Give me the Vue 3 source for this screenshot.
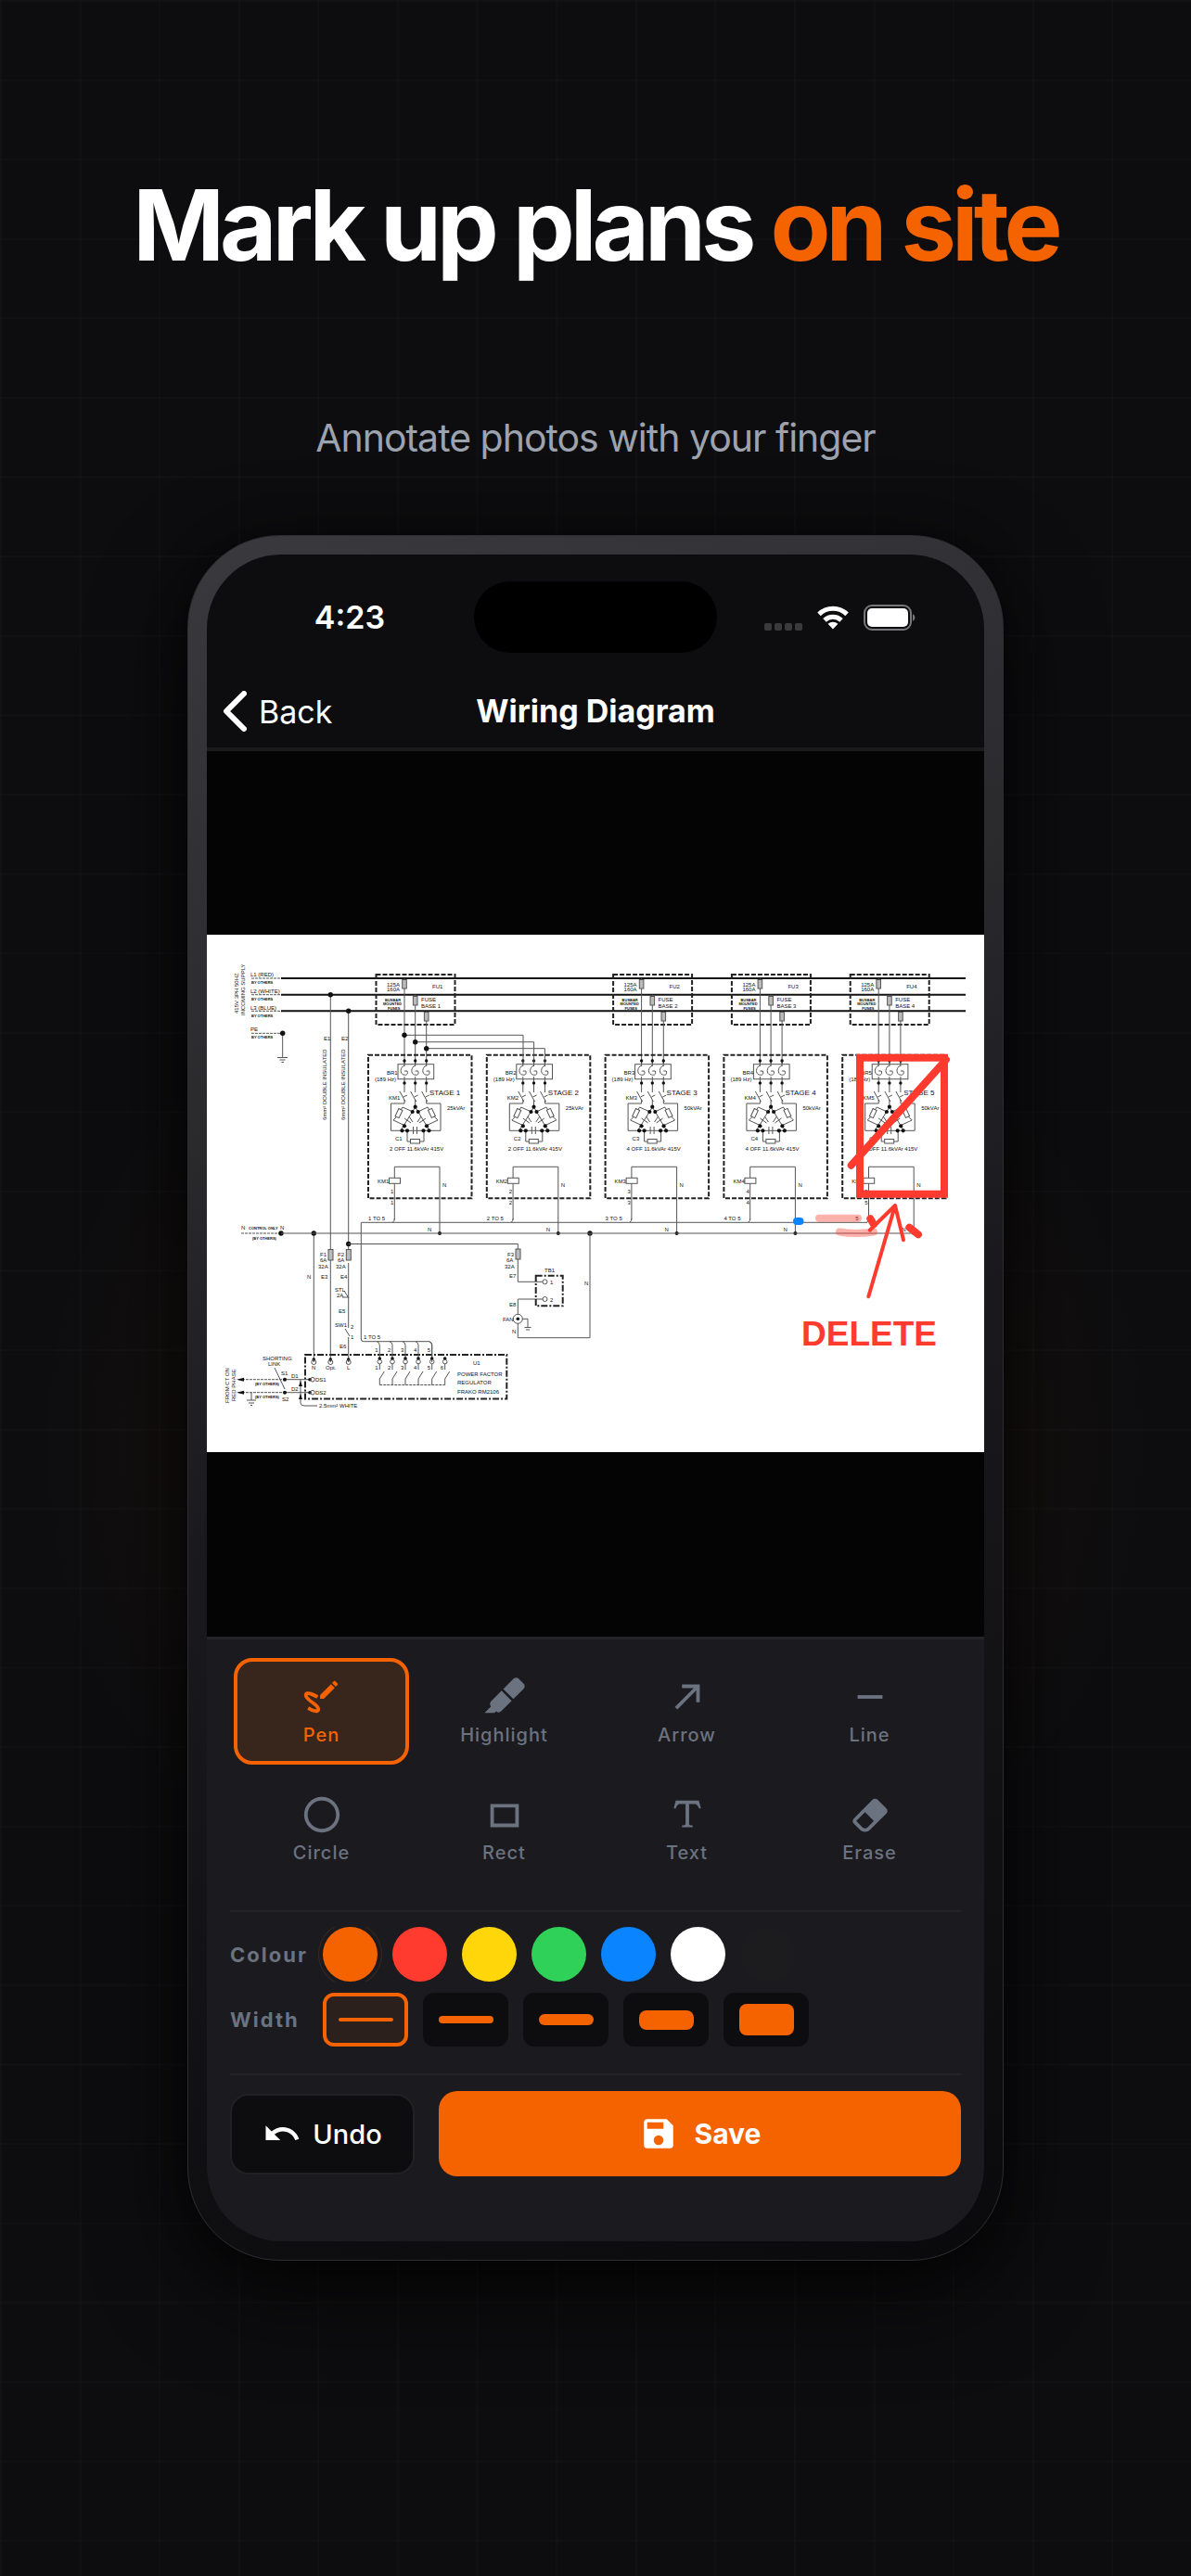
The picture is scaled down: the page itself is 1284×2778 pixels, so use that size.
<template>
  <main class="promo">
    <h1 class="headline">Mark up plans <span class="accent">on site</span></h1>
    <p class="subtitle">Annotate photos with your finger</p>

    <div class="phone">
      <div class="screen">
        <div class="status-bar">
          <span class="time">4:23</span>
          <div class="island"></div>
          <div class="status-icons">
            <div class="signal"><i v-for="n in 4" :key="n"></i></div>
            <svg class="wifi" viewBox="0 0 34 26">
              <path fill="#fff" d="M17 25.5 11.6 19.8a8 8 0 0 1 10.8 0z" />
              <path fill="none" stroke="#fff" stroke-width="5" d="M8 15.9a12.8 12.8 0 0 1 18 0M2 9.4a21.5 21.5 0 0 1 30 0" />
            </svg>
            <svg class="battery" viewBox="0 0 56 28">
              <rect x="1" y="1" width="50" height="26" rx="8" fill="none" stroke="#77777a" stroke-width="2" />
              <rect x="4" y="4" width="44" height="20" rx="5" fill="#fff" />
              <path d="M53 10a4.5 4.5 0 0 1 0 8z" fill="#77777a" />
            </svg>
          </div>
        </div>

        <header class="nav">
          <a href="#" class="back">
            <svg viewBox="0 0 26 44"><path d="M23 3 4 22l19 19" /></svg>
            Back
          </a>
          <h2 class="nav-title">Wiring Diagram</h2>
        </header>

        <div class="canvas">
          <svg class="plan" viewBox="0 0 838 558">
            <rect width="838" height="558" fill="#fff" />

            <!-- supply rails -->
            <path class="rail" d="M80 47H818M80 64.7H818M80 82.3H818" />
            <path class="wire dash" d="M48 47h32M48 64.7h32M48 82.3h32M48 106.3h32M37 322h42" />
            <g v-for="s in supplies" :key="s.label">
              <text x="47" :y="s.y">{{ s.label }}</text>
              <text class="bold" x="48" :y="s.y + 8">BY OTHERS</text>
            </g>
            <text transform="translate(34 85) rotate(-90)">415V 3PH 50HZ</text>
            <text transform="translate(41 87) rotate(-90)">INCOMING SUPPLY</text>
            <path class="wire" d="M81.7 106V132M76 132.5h11M78.5 135h6M80.5 137.5h2.5" />

            <!-- control feeds -->
            <path class="wire" d="M133.3 64.7V461M152.7 82.3V341M152.7 354V424M152.7 434V461M115.3 322V461" />
            <text x="126" y="114">E1</text>
            <text x="145" y="114">E2</text>
            <text transform="translate(129 200) rotate(-90)">6mm² DOUBLE INSULATED</text>
            <text transform="translate(149 200) rotate(-90)">6mm² DOUBLE INSULATED</text>

            <!-- stages -->
            <g v-for="st in stages" :key="st.n" :transform="`translate(${st.x} 0)`">
              <g v-if="st.fuse">
                <rect class="box" x="8.5" y="43" width="85" height="54" />
                <path class="wire" d="M39 47V140M50.7 64.7V140M62.7 82.3V140" />
                <rect class="fuse" x="36.7" y="48.5" width="4.6" height="9.5" />
                <rect class="fuse" x="48.4" y="66.5" width="4.6" height="9.5" />
                <rect class="fuse" x="60.4" y="83.5" width="4.6" height="9.5" />
                <text x="20" y="56">125A</text>
                <text x="20" y="61">160A</text>
                <text class="bold" x="18" y="71.5">BUSBAR</text>
                <text class="bold" x="16" y="76">MOUNTED</text>
                <text class="bold" x="21" y="80.5">FUSES</text>
                <text x="69" y="58">FU{{ st.fuse }}</text>
                <text x="57" y="72">FUSE</text>
                <text x="57" y="78.5">BASE {{ st.fuse }}</text>
              </g>
              <rect class="box" x="0" y="129.7" width="111.5" height="154.6" />
              <path class="wire" d="M39 134V170M50.7 134V170M62.7 134V170" />
              <rect class="wire" x="32" y="139.7" width="38.7" height="16" />
              <g v-for="x in [39, 50.7, 62.7]" :key="x" :transform="`translate(${x} 0)`">
                <rect x="-2.5" y="142" width="5" height="11" fill="#fff" />
                <path class="wire" d="M0 141c-5 2-5 9-1 10s5-1 4-4h-3M-5 169l6 11M3 173l-4 2" />
                <circle r="1.7" cy="136" />
                <circle r="1.7" cy="160" />
              </g>
              <text x="20" y="151">BR{{ st.n }}</text>
              <text x="7" y="157.5">(189 Hz)</text>
              <text class="large" x="66" y="173">STAGE {{ st.n }}</text>
              <text x="22" y="178">KM{{ st.n }}</text>
              <text x="85" y="189">{{ st.kvar }}kVAr</text>
              <path class="wire" d="M39 178V182H24.5V211.3H78V182H62.7V178M50.7 178V186M50.7 186 35 211M50.7 186 66 211M48 191 37 186 30 197 27 200 40 206M53.5 191 64 186 72 197 75 200 62 206" />
              <path class="wire" d="M42 211.3V223H60V211.3M44 196l4 6M46 203l-7-5M57 196l-4 6M55 203l7-5M48.5 207v8M52.5 207v8" />
              <rect class="wire paper" x="45.5" y="220.5" width="10" height="4.5" />
              <rect class="wire paper" x="31" y="188" width="4.5" height="9" transform="rotate(25 33 192)" />
              <rect class="wire paper" x="66" y="188" width="4.5" height="9" transform="rotate(-25 68 192)" />
              <circle v-for="(d, i) in dots" :key="i" :cx="d[0]" :cy="d[1]" r="2.1" />
              <text x="29" y="222">C{{ st.n }}</text>
              <text x="23" y="233">{{ st.off }} OFF 11.6kVAr 415V</text>

              <path class="wire" d="M28.3 307.5V250.3H77V322" />
              <rect class="wire paper" x="22.5" y="262.3" width="12" height="6" />
              <path class="wire" d="M28.3 306q0 3-2 4.3" />
              <text x="10" y="267.5">KM{{ st.n }}</text>
              <text x="80" y="271.5">N</text>
              <text x="24" y="279">{{ st.n }}</text>
              <text x="24" y="291">{{ st.n }}</text>
              <text v-if="st.n < 5" x="0" y="307.5">{{ st.n }} TO 5</text>
              <text v-else x="14" y="307.5">5</text>
              <text x="64" y="319.5">N</text>
              <circle cx="77" cy="322" r="2" />
            </g>
            <path class="wire" d="M213 108.3H341V140M224.7 115.7H352.6V140M236.7 122.7H364.4V140" />
            <circle v-for="(j, i) in junctions" :key="'j' + i" :cx="j[0]" :cy="j[1]" r="2.7" />

            <!-- control and neutral lines -->
            <path class="wire" d="M712 310.3H166.3V436q0 2.7 3 2.7H240q2.7 1 2.7 4V461M80 322H762" />
            <path class="wire" d="M152.7 333.5H335.3V374.3H362M362 393H335.3V409M335.3 419V434.7H413V322M340 414.3H346V423M342.5 423.5h7M344 426h4" />
            <rect class="fuse" x="131" y="339.5" width="5" height="11.5" />
            <rect class="fuse" x="150.3" y="339.5" width="5" height="11.5" />
            <rect class="fuse" x="333" y="339" width="5" height="11" />
            <rect class="box fine" x="354.7" y="367.7" width="29" height="32.6" />
            <circle class="wire" cx="364.5" cy="374.3" r="2.5" />
            <circle class="wire" cx="364.5" cy="393" r="2.5" />
            <circle class="wire" cx="335.3" cy="414.3" r="5" />
            <circle cx="335.3" cy="414.3" r="1.8" />
            <path class="wire" d="M148 384l5 8M146 391h7M149 425l5 8" />

            <!-- regulator -->
            <rect class="box fine" x="106" y="453" width="217.3" height="47.5" />
            <g v-for="(x, i) in contacts" :key="x" :transform="`translate(${x} 0)`">
              <path v-if="i < 5" class="wire" d="M-3 438.7q3 1 3 4V458" />
              <circle cy="457" r="1.8" />
              <circle class="wire" cy="460.5" r="2.3" />
              <path class="wire" d="M0 463V469M5 471 0 479V485.5" />
              <text v-if="i < 5" x="-5" y="450">{{ i + 1 }}</text>
              <text x="-5" y="469">{{ i + 1 }}</text>
            </g>
            <path class="wire dash" d="M186.3 485.5H256.7" />
            <g v-for="x in [115.3, 133.3, 152.7]" :key="x">
              <circle :cx="x" cy="458" r="1.8" />
              <circle class="wire" :cx="x" cy="461" r="2.5" />
            </g>

            <!-- current transformer input -->
            <path class="wire dash" d="M34 479.7H84M34 493.7H84" />
            <path class="wire" d="M84 479.7H112M84 493.7H112M101 479.7V505q0 3 4 3H119M73 467 84 490M48 494V502M43 502h10M45 505h6M47 507.5h2" />
            <path d="M32 479.7l8-2v4zM32 493.7l8-2v4z" />
            <g v-for="y in [479.7, 493.7]" :key="y">
              <circle cx="84" :cy="y" r="2" />
              <circle cx="111" :cy="y" r="1.8" />
              <circle class="wire" cx="114" :cy="y" r="2.3" />
            </g>
            <path d="M101 481l2 6h-4zM101 495l2 6h-4z" />
            <text transform="translate(24 505) rotate(-90)">FROM CT ON</text>
            <text transform="translate(31 503) rotate(-90)">RED PHASE</text>

            <text v-for="(l, i) in labels" :key="'l' + i" :x="l[0]" :y="l[1]" :class="l[3]">{{ l[2] }}</text>

            <!-- mark-up layer -->
            <g class="markup">
              <g class="highlighter">
                <path d="M660 305.7H702" />
                <path d="M682 320.5q17 3 37 0" />
              </g>
              <path class="blue" d="M636 309h3.5" />
              <rect x="704" y="132.7" width="91" height="147" />
              <path d="M694.7 248.7 797 134.7M715.3 306.3l3.5 6M757.3 315.7 767 323.3" />
              <path class="arrow" d="M713.3 390.3 742 292M714.7 318.7 742 292 751 329.3" />
              <text class="delete" x="641" y="443">DELETE</text>
            </g>
          </svg>
        </div>

        <section class="panel">
          <div class="tools">
            <button
              v-for="tool in tools"
              :key="tool.name"
              class="tool"
              :class="{ active: tool.name === activeTool }"
              @click="activeTool = tool.name"
            >
              <svg viewBox="0 0 24 24"><path :d="tool.icon" /></svg>
              <span>{{ tool.name }}</span>
            </button>
          </div>

          <div class="options">
            <div class="option-row">
              <span id="colour-label" class="option-label">Colour</span>
              <div class="swatches" role="radiogroup" aria-labelledby="colour-label">
                <input
                  v-for="c in colours"
                  :key="c.name"
                  v-model="activeColour"
                  type="radio"
                  name="colour"
                  class="swatch"
                  :value="c.name"
                  :aria-label="c.name"
                  :style="{ background: c.hex }"
                >
              </div>
            </div>
            <div class="option-row">
              <span id="width-label" class="option-label">Width</span>
              <div class="widths" role="group" aria-labelledby="width-label">
                <button
                  v-for="w in widths"
                  :key="w"
                  class="width"
                  :class="{ active: w === activeWidth }"
                  :aria-label="w + ' px'"
                  @click="activeWidth = w"
                >
                  <span class="bar" :style="{ height: w + 'px' }"></span>
                </button>
              </div>
            </div>
          </div>

          <div class="actions">
            <button class="undo">
              <svg viewBox="0 0 24 24"><path :d="icons.undo" /></svg>
              Undo
            </button>
            <button class="save">
              <svg viewBox="0 0 24 24"><path :d="icons.save" /></svg>
              Save
            </button>
          </div>
        </section>
      </div>
    </div>
  </main>
</template>

<script setup>
import { ref } from 'vue'

const activeTool = ref('Pen')
const activeColour = ref('Orange')
const activeWidth = ref(4)

const tools = [
  { name: 'Pen', icon: 'M9.75 20.85C11.53 20.15 11.14 18.22 10.24 17C9.35 15.75 8.12 14.89 6.88 14.06C6 13.5 5.19 12.8 4.54 12C4.26 11.67 3.69 11.06 4.27 10.94C4.86 10.82 5.88 11.4 6.4 11.62C7.31 12 8.21 12.44 9.05 12.96L10.06 11.26C8.5 10.23 6.5 9.32 4.64 9.05C3.58 8.89 2.46 9.11 2.1 10.26C1.78 11.25 2.29 12.25 2.87 13.03C4.24 14.86 6.37 15.74 7.96 17.32C8.3 17.65 8.71 18.04 8.91 18.5C9.12 18.94 9.07 18.97 8.6 18.97C7.36 18.97 5.81 18 4.8 17.36L3.79 19.06C5.32 20 7.88 21.47 9.75 20.85M20.84 5.25C21.06 5.03 21.06 4.67 20.84 4.46L19.54 3.16C19.33 2.95 18.97 2.95 18.76 3.16L17.73 4.18L19.82 6.26M11 10.92V13H13.08L19.23 6.85L17.15 4.77L11 10.92Z' },
  { name: 'Highlight', icon: 'M18.5,1.15C17.97,1.15 17.46,1.34 17.07,1.73L11.26,7.55L16.91,13.2L22.73,7.39C23.5,6.61 23.5,5.35 22.73,4.56L19.89,1.73C19.5,1.34 19,1.15 18.5,1.15M10.3,8.5L4.34,14.46C3.56,15.24 3.56,16.5 4.36,17.31C3.14,18.54 1.9,19.77 0.67,21H6.33L7.19,20.14C7.97,20.9 9.22,20.89 10,20.12L15.95,14.16' },
  { name: 'Arrow', icon: 'M5,17.59L15.59,7H9V5H19V15H17V8.41L6.41,19L5,17.59Z' },
  { name: 'Line', icon: 'M19,13H5V11H19V13Z' },
  { name: 'Circle', icon: 'M12,20A8,8 0 0,1 4,12A8,8 0 0,1 12,4A8,8 0 0,1 20,12A8,8 0 0,1 12,20M12,2A10,10 0 0,0 2,12A10,10 0 0,0 12,22A10,10 0 0,0 22,12A10,10 0 0,0 12,2Z' },
  { name: 'Rect', icon: 'M4,6V19H20V6H4M18,17H6V8H18V17Z' },
  { name: 'Text', icon: 'M18.5,4L19.66,8.35L18.7,8.61C18.25,7.74 17.79,6.87 17.26,6.43C16.73,6 16.11,6 15.5,6H13V16.5C13,17 13,17.5 13.33,17.75C13.67,18 14.33,18 15,18V19H9V18C9.67,18 10.33,18 10.67,17.75C11,17.5 11,17 11,16.5V6H8.5C7.89,6 7.27,6 6.74,6.43C6.21,6.87 5.75,7.74 5.3,8.61L4.34,8.35L5.5,4H18.5Z' },
  { name: 'Erase', icon: 'M16.24,3.56L21.19,8.5C21.97,9.29 21.97,10.55 21.19,11.34L12,20.53C10.44,22.09 7.91,22.09 6.34,20.53L2.81,17C2.03,16.21 2.03,14.95 2.81,14.16L13.41,3.56C14.2,2.78 15.46,2.78 16.24,3.56M4.22,15.58L7.76,19.11C8.54,19.9 9.8,19.9 10.59,19.11L14.12,15.58L9.17,10.63L4.22,15.58Z' }
]

const icons = {
  undo: 'M12.5,8C9.85,8 7.45,9 5.6,10.6L2,7V16H11L7.38,12.38C8.77,11.22 10.54,10.5 12.5,10.5C16.04,10.5 19.08,12.81 20.14,16L22.5,15.22C21.11,11.03 17.15,8 12.5,8Z',
  save: 'M15,9H5V5H15M12,19A3,3 0 0,1 9,16A3,3 0 0,1 12,13A3,3 0 0,1 15,16A3,3 0 0,1 12,19M17,3H5C3.89,3 3,3.9 3,5V19A2,2 0 0,0 5,21H19A2,2 0 0,0 21,19V7L17,3Z'
}

const colours = [
  { name: 'Orange', hex: '#f56300' },
  { name: 'Red', hex: '#ff3b30' },
  { name: 'Yellow', hex: '#ffd60a' },
  { name: 'Green', hex: '#30d158' },
  { name: 'Blue', hex: '#0a84ff' },
  { name: 'White', hex: '#ffffff' },
  { name: 'Black', hex: '#1c1c1e' }
]

const widths = [4, 8, 12, 21, 34]

// Wiring diagram data
const stages = [
  { n: 1, fuse: 1, kvar: 25, off: 2 },
  { n: 2, fuse: 0, kvar: 25, off: 2 },
  { n: 3, fuse: 2, kvar: 50, off: 4 },
  { n: 4, fuse: 3, kvar: 50, off: 4 },
  { n: 5, fuse: 4, kvar: 50, off: 4 }
].map((s, i) => ({ ...s, x: 174 + i * 127.8 }))

const supplies = [
  { label: 'L1 (RED)', y: 44.5 },
  { label: 'L2 (WHITE)', y: 62.5 },
  { label: 'L3 (BLUE)', y: 80.5 },
  { label: 'PE', y: 103.5 }
]

const dots = [
  [50.7, 185.7], [47.7, 191], [53.7, 191], [39, 206.3], [63, 206.3],
  [36.5, 211.3], [65.5, 211.3], [42, 211.3], [59.5, 211.3]
]

const junctions = [
  [213, 108.3], [224.7, 115.7], [236.7, 122.7], [133.3, 64.7], [152.7, 82.3],
  [81.7, 106.3], [115.3, 322], [152.7, 333.5], [413, 322], [80, 322]
]

const contacts = [186.3, 200, 214, 228, 242.7, 256.7]

// x, y, text, class
const labels = [
  [37, 318, 'N'], [45, 317.5, 'CONTROL ONLY', 'bold'], [79, 318, 'N'], [49, 329, '(BY OTHERS)', 'bold'],
  [122, 347, 'F1'], [122, 353, '6A'], [120, 359.5, '32A'],
  [141, 347, 'F2'], [141, 353, '6A'], [139, 359.5, '32A'],
  [108, 371, 'N'], [123, 371, 'E3'], [144, 371, 'E4'],
  [138, 385, 'STL'], [140, 391, '2A'], [142, 408, 'E5'],
  [138, 423, 'SW1'], [155, 424.5, '2'], [155, 436, '1'], [143, 446, 'E6'],
  [169, 436, '1 TO 5'],
  [324, 347, 'F3'], [323, 353, '6A'], [321, 359.5, '32A'], [326, 370, 'E7'], [326, 401, 'E8'],
  [319, 416.5, 'FAN'], [329, 430, 'N'], [407, 378, 'N'],
  [364, 364, 'TB1'], [370, 377, '1'], [370, 396, '2'],
  [113, 468.5, 'N'], [128, 468.5, 'Opt.'], [151, 468.5, 'L'],
  [287, 463.5, 'U1'],
  [270, 475.5, 'POWER FACTOR'], [270, 484.5, 'REGULATOR'], [270, 494.5, 'FRAKO RM2106'],
  [60, 459, 'SHORTING'], [66, 465, 'LINK'], [80, 474.5, 'S1'], [91, 477.5, 'D1'], [91, 492, 'D2'], [81, 503, 'S2'],
  [52, 485.5, '(BY OTHERS)', 'bold'], [52, 499.5, '(BY OTHERS)', 'bold'],
  [117, 482, 'DS1'], [117, 496, 'DS2'], [121, 510, '2.5mm² WHITE']
]
</script>

<style>
body {
  background: #0d0d0f;
}
</style>

<style scoped>
.promo {
  box-sizing: border-box;
  display: flex;
  flex-direction: column;
  align-items: center;
  min-height: 100vh;
  padding: 179px 64px 341px;
  background:
    radial-gradient(ellipse 47% 21% at 50% 56%, rgba(245, 99, 0, 0.11), transparent 100%),
    linear-gradient(rgba(255, 255, 255, 0.015) 2px, transparent 2px) 0 0 / calc(100vw / 15) calc(100vw / 15),
    linear-gradient(90deg, rgba(255, 255, 255, 0.015) 2px, transparent 2px) 0 0 / calc(100vw / 15) calc(100vw / 15),
    #0d0d0f;
  color: #fff;
  font-family: Inter, "Liberation Sans", sans-serif;
}

.headline {
  margin: 0;
  font-size: 106px;
  font-weight: 700;
  line-height: 128px;
  letter-spacing: -5px;
  text-align: center;
}

.accent {
  color: #f56300;
}

.subtitle {
  margin: 139px 0 79px;
  color: #9ca3af;
  font-size: 41px;
  line-height: 52px;
  letter-spacing: -1px;
  text-align: center;
}

.phone {
  box-sizing: border-box;
  width: 100%;
  max-width: 880px;
  padding: 20px;
  border: 1px solid #2d2d30;
  border-radius: 100px;
  background: linear-gradient(160deg, #3a3a3e 0%, #2a2a2d 30%, #1a1a1e 50%, #101012 80%, #0a0a0c 100%);
  box-shadow: 0 36px 100px rgba(0, 0, 0, 0.7), 0 0 40px rgba(0, 0, 0, 0.4);
}

.screen {
  overflow: hidden;
  border-radius: 80px;
  background: #0d0d0f;
}

.status-bar {
  display: grid;
  grid-template-columns: 1fr 262px 1fr;
  align-items: center;
  padding: 29px 0 24px;
}

.time {
  padding-left: 20px;
  font-size: 34px;
  font-weight: 600;
  text-align: center;
}

.island {
  height: 77px;
  border-radius: 39px;
  background: #000;
}

.status-icons {
  display: flex;
  align-items: center;
  justify-content: center;
  gap: 16px;
  height: 28px;
  padding-right: 23px;
}

.signal {
  display: flex;
  align-self: flex-end;
  gap: 3px;
}

.signal i {
  width: 8px;
  height: 8px;
  border-radius: 2px;
  background: #3a3a3c;
}

.wifi {
  width: 34px;
  height: 26px;
}

.battery {
  width: 56px;
  height: 28px;
}

.nav {
  display: grid;
  grid-template-columns: 1fr auto 1fr;
  align-items: center;
  height: 78px;
  border-bottom: 4px solid #1b1b1d;
}

.back {
  display: flex;
  align-items: center;
  gap: 13px;
  padding-left: 17px;
  color: #fff;
  font-size: 34px;
  text-decoration: none;
}

.back svg {
  width: 26px;
  height: 44px;
  fill: none;
  stroke: #fff;
  stroke-width: 6;
  stroke-linecap: round;
  stroke-linejoin: round;
}

.nav-title {
  margin: 0;
  font-size: 34px;
  font-weight: 700;
  line-height: 44px;
}

.canvas {
  padding: 198px 0 199px;
  background: #040404;
}

.plan {
  display: block;
  width: 100%;
  fill: #111;
  font-family: "Liberation Sans", sans-serif;
  font-size: 6px;
}

.rail {
  fill: none;
  stroke: #111;
  stroke-width: 2;
}

.wire {
  fill: none;
  stroke: #555;
  stroke-width: 1;
}

.paper {
  fill: #fff;
}

.dash {
  stroke-dasharray: 3 1;
}

.box {
  fill: none;
  stroke: #222;
  stroke-width: 2;
  stroke-dasharray: 5 2;
}

.fine {
  stroke-dasharray: 7 2 2 2;
}

.fuse {
  fill: #bbb;
  stroke: #555;
  stroke-width: 1;
}

.bold {
  font-size: 4px;
  font-weight: 700;
}

.large {
  font-size: 8px;
}

.markup {
  fill: none;
  stroke: #ff3b30;
  stroke-width: 8;
  stroke-linecap: round;
}

.highlighter {
  stroke: rgba(255, 59, 48, 0.4);
}

.blue {
  stroke: #0a84ff;
}

.arrow {
  stroke-width: 4;
  stroke-linejoin: round;
}

.delete {
  fill: #ff3b30;
  stroke: none;
  font-size: 37px;
  font-weight: 700;
}

.panel {
  padding: 20px 25px 70px;
  border-top: 3px solid #242427;
  background: #1b1a1e;
}

.tools {
  display: grid;
  grid-template-columns: repeat(4, 1fr);
  gap: 12px 8px;
  padding: 0 4px 30px;
}

button {
  border: 0;
  font-family: inherit;
  cursor: pointer;
}

.tool {
  display: flex;
  flex-direction: column;
  align-items: center;
  justify-content: center;
  gap: 6px;
  height: 115px;
  padding: 0 0 2px;
  border: 4px solid transparent;
  border-radius: 20px;
  background: none;
  color: #6b7280;
  font-size: 20px;
  font-weight: 500;
  line-height: 24px;
  letter-spacing: 1px;
}

.tool svg {
  width: 46px;
  height: 46px;
  fill: currentColor;
}

.tool.active {
  border-color: #f56300;
  background: #38261d;
  color: #f56300;
}

.options {
  display: flex;
  flex-direction: column;
  gap: 12px;
  padding: 16px 0 29px;
  border-top: 2px solid #242425;
}

.option-row {
  display: flex;
  align-items: center;
  gap: 16px;
}

.option-label {
  width: 84px;
  color: #6b7280;
  font-size: 22px;
  font-weight: 700;
  letter-spacing: 2px;
}

.swatches,
.widths {
  display: flex;
  gap: 16px;
}

.swatches {
  overflow-y: clip;
}

.swatch {
  width: 59px;
  height: 59px;
  margin: 0;
  border-radius: 50%;
  appearance: none;
  cursor: pointer;
}

.swatch:checked {
  box-shadow: 0 0 0 4px #1b1a1e, 0 0 0 5px #3a2a20;
}

.width {
  display: flex;
  align-items: center;
  justify-content: center;
  width: 92px;
  height: 58px;
  padding: 0;
  border-radius: 12px;
  background: #0d0d0f;
}

.width.active {
  border: 4px solid #f56300;
  background: #2c201c;
}

.bar {
  width: 59px;
  border-radius: 8px;
  background: #f56300;
}

.actions {
  display: flex;
  align-items: center;
  gap: 26px;
  padding-top: 17px;
  border-top: 2px solid #242425;
}

.undo,
.save {
  display: flex;
  align-items: center;
  justify-content: center;
  border-radius: 20px;
  color: #fff;
}

.undo {
  gap: 12px;
  width: 199px;
  height: 87px;
  border: 2px solid #212123;
  background: #0d0d0f;
  font-size: 29px;
  font-weight: 500;
}

.save {
  flex: 1;
  gap: 18px;
  height: 92px;
  background: #f56300;
  font-size: 30px;
  font-weight: 700;
}

.undo svg,
.save svg {
  width: 42px;
  height: 42px;
  fill: currentColor;
}
</style>
